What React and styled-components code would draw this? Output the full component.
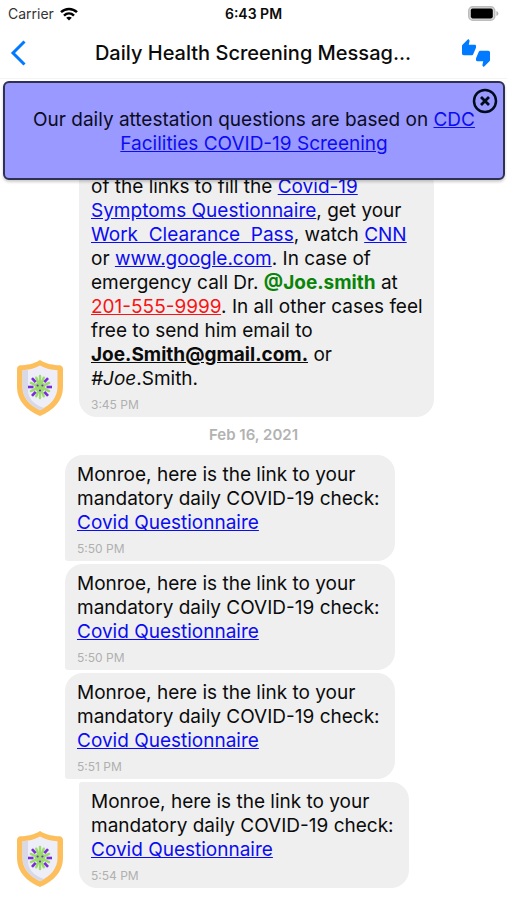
import React, { useState } from "react";
import styled, { createGlobalStyle } from "styled-components";
import { MdThumbsUpDown } from "react-icons/md";

const QUESTIONNAIRE_MESSAGES = [
    { id: 1, time: "5:50 PM" },
    { id: 2, time: "5:50 PM" },
    { id: 3, time: "5:51 PM" },
    { id: 4, time: "5:54 PM", last: true },
];

const GREEN_SPIKES = [0, 22, 66, 114, 158, 180, 202, 246, 294, 338];
const PURPLE_SPIKES = [42, 90, 138, 222, 270, 318];

function WifiIcon() {
    return (
        <svg width="18" height="14" viewBox="0 0 18 14" fill="none" stroke="#000" strokeWidth="2.5" aria-hidden="true">
            <path d="M1 5.2C5.6.9 12.4.9 17 5.2" />
            <path d="M4 8.6c2.9-2.7 7.1-2.7 10 0" />
            <path d="M9 13.6 6.2 10.8c1.6-1.5 4-1.5 5.6 0z" fill="#000" stroke="none" />
        </svg>
    );
}

function BatteryIcon() {
    return (
        <svg width="31" height="15" viewBox="0 0 31 15" aria-hidden="true">
            <rect x=".75" y=".75" width="26" height="13.5" rx="4" fill="#d8d8d8" stroke="#bdbdbd" strokeWidth="1.5" />
            <rect x="2.8" y="2.6" width="22" height="9.8" rx="1.8" fill="#000" />
            <path d="M28.4 5v5c1.3-.5 2-1.4 2-2.5s-.7-2-2-2.5z" fill="#b5b5b5" />
        </svg>
    );
}

function ShieldAvatar() {
    return (
        <Avatar viewBox="0 0 46 56" role="img" aria-label="Health screening">
            <path d="M23 0c6.5 4.3 14 5 19.5 5.300 2 .1 3.500 1.700 3.500 3.700v18c0 13.500-9.500 23.500-23 29C9.500 50.500 0 40.500 0 27V9c0-2 1.500-3.600 3.500-3.700C9 5 16.500 4.300 23 0z" fill="#fdbf5c" />
            <path d="M23 5.500c5.700 3.300 11.500 4.300 17.500 4.700V27c0 10-6.500 18-17.500 23.200C12 45 5.500 37 5.500 27V10.200C11.500 9.800 17.300 8.800 23 5.500z" fill="#eeeef8" />
            <path d="M11 9.600v23c1.500 7.500 8 13.400 16.500 15.300a40 40 0 0 1-4.500 2.300C12 45 5.500 37 5.500 27V10.200c1.900-.1 3.700-.3 5.500-.6z" fill="#d8d9e8" />
            <g transform="translate(23 27)">
                {GREEN_SPIKES.map(angle => (
                    <path key={angle} d={angle % 180 ? "M0-4v-6" : "M0-4v-7"} transform={`rotate(${angle})`} stroke="#9bdb6c" strokeWidth="2.4" strokeLinecap="round" />
                ))}
                {PURPLE_SPIKES.map(angle => (
                    <path key={angle} d="M0-6.500v-5.500" transform={`rotate(${angle})`} stroke="#7a2bd6" strokeWidth="2.6" />
                ))}
                <circle r="5.4" fill="#9bdb6c" />
                <circle cx="-2.4" cy="-1.5" r="1.1" fill="#7a2bd6" />
                <circle cx="2.4" cy="-1.5" r="1.1" fill="#7a2bd6" />
                <circle cy="3.5" r="1.1" fill="#7a2bd6" />
            </g>
        </Avatar>
    );
}

function Message({ time, last, wide, children }) {
    return (
        <Row $withAvatar={last}>
            {last && <ShieldAvatar />}
            <Bubble $last={last} $wide={wide}>
                <MessageText>{children}</MessageText>
                <Time>{time}</Time>
            </Bubble>
        </Row>
    );
}

function App() {
    const [bannerOpen, setBannerOpen] = useState(true);

    return (
        <Screen>
            <GlobalStyle />
            <StatusBar>
                <Carrier>Carrier <WifiIcon /></Carrier>
                <Clock>6:43 PM</Clock>
                <Battery><BatteryIcon /></Battery>
            </StatusBar>
            <Header>
                <IconButton aria-label="Back">
                    <svg width="16" height="26" viewBox="0 0 16 26" fill="none" stroke="currentColor" strokeWidth="3" aria-hidden="true">
                        <path d="M14.5 1.5 3 13l11.5 11.5" />
                    </svg>
                </IconButton>
                <Title>Daily Health Screening Messag...</Title>
                <IconButton $end aria-label="Rate conversation">
                    <MdThumbsUpDown size={28} />
                </IconButton>
            </Header>
            <Content>
                {bannerOpen && (
                    <Banner>
                        <p>
                            Our daily attestation questions are based on <Link href="#cdc">CDC Facilities COVID-19 Screening</Link>
                        </p>
                        <CloseButton aria-label="Close" onClick={() => setBannerOpen(false)}>
                            <svg width="26" height="26" viewBox="0 0 26 26" fill="none" stroke="#000c1c" aria-hidden="true">
                                <circle cx="13" cy="13" r="11" strokeWidth="2.5" />
                                <path d="m9 9 8 8M17 9l-8 8" strokeWidth="2.8" />
                            </svg>
                        </CloseButton>
                    </Banner>
                )}
                <Messages>
                    <Message time="3:45 PM" last wide>
                        of the links to fill the <Link href="#symptoms">Covid-19 Symptoms Questionnaire</Link>, get your{" "}
                        <Link href="#pass">Work&nbsp; Clearance&nbsp; Pass</Link>, watch <Link href="#cnn">CNN</Link> or{" "}
                        <Link href="#google">www.google.com</Link>. In case of emergency call Dr. <Mention>@Joe.smith</Mention> at{" "}
                        <PhoneLink href="tel:201-555-9999">201-555-9999</PhoneLink>. In all other cases feel free to send him email to{" "}
                        <EmailLink href="mailto:Joe.Smith@gmail.com">Joe.Smith@gmail.com.</EmailLink> or <em>#Joe</em>.Smith.
                    </Message>
                    <DateLabel>Feb 16, 2021</DateLabel>
                    {QUESTIONNAIRE_MESSAGES.map(({ id, time, last }) => (
                        <Message key={id} time={time} last={last}>
                            Monroe, here is the link to your mandatory daily COVID-19 check: <Link href="#covid">Covid Questionnaire</Link>
                        </Message>
                    ))}
                </Messages>
            </Content>
        </Screen>
    );
}

const GlobalStyle = createGlobalStyle`
* {
    box-sizing: border-box;
}
body {
    margin: 0;
    background: #fff;
    color: #0b0b0b;
    font-family: Inter, "Liberation Sans", sans-serif;
}
p, h1 {
    margin: 0;
}
`

const Screen = styled.div`
min-height: 100vh;
`

const StatusBar = styled.div`
display: grid;
grid-template-columns: 1fr auto 1fr;
align-items: center;
height: 27px;
padding: 0 8px;
font-size: 14px;
line-height: 16px;
`

const Carrier = styled.span`
display: flex;
align-items: center;
gap: 6px;
color: #333;
`

const Clock = styled.span`
font-weight: 600;
`

const Battery = styled.span`
display: flex;
justify-content: flex-end;
`

const Header = styled.header`
display: grid;
grid-template-columns: 1fr auto 1fr;
align-items: center;
height: 52px;
padding: 0 17px 0 10px;
border-bottom: 1px solid #f4f4f4;
`

const Title = styled.h1`
padding-left: 6px;
font-size: 20px;
line-height: 24px;
font-weight: 500;
`

const IconButton = styled.button`
display: flex;
justify-self: ${props => (props.$end ? "end" : "start")};
padding: 0;
border: none;
background: none;
color: #007aff;
cursor: pointer;
`

const Content = styled.main`
position: relative;
`

const Banner = styled.section`
position: absolute;
z-index: 1;
top: 2px;
left: 3px;
right: 2px;
padding: 25px 28px 22px;
border: 2px solid #303052;
border-radius: 6px;
background: #9999ff;
box-shadow: 0 2px 3px rgba(0, 0, 0, 0.2);
color: #0b0b22;
font-size: 19px;
line-height: 24px;
text-align: center;
`

const CloseButton = styled.button`
position: absolute;
top: 5px;
right: 5px;
display: flex;
padding: 0;
border: none;
background: none;
cursor: pointer;
`

const Messages = styled.div`
display: flex;
flex-direction: column;
gap: 3px;
padding: 88px 0 12px;
`

const Row = styled.div`
display: flex;
align-items: flex-end;
gap: 16px;
padding-left: ${props => (props.$withAvatar ? "17px" : "65px")};
`

const Avatar = styled.svg`
flex: none;
width: 46px;
height: 56px;
margin-bottom: 1px;
`

const Bubble = styled.div`
width: ${props => (props.$wide ? "70vw" : "65vw")};
padding: 8px 4px 5px 12px;
border-radius: ${props => (props.$last ? "3px 18px 18px 18px" : "18px 18px 18px 3px")};
background: #efefef;
`

const MessageText = styled.p`
font-size: 19px;
line-height: 24px;
`

const Time = styled.time`
display: block;
margin-top: 6px;
color: #b0b0b0;
font-size: 12px;
line-height: 15px;
`

const DateLabel = styled.p`
padding: 7px 0 9px;
color: #b2b2b2;
font-size: 15px;
line-height: 16px;
font-weight: 600;
text-align: center;
`

const Link = styled.a`
color: #0c0cf2;
text-decoration: underline;
`

const PhoneLink = styled(Link)`
color: #f81414;
`

const EmailLink = styled(Link)`
color: #0b0b0b;
font-weight: 700;
`

const Mention = styled.span`
color: #088408;
font-weight: 700;
`

export default App;
